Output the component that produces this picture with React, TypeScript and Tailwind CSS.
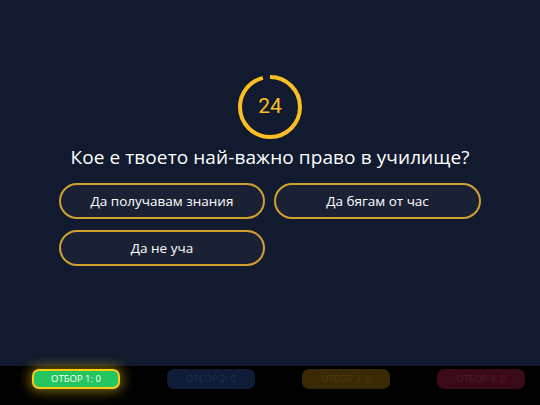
const answers = ["Да получавам знания", "Да бягам от час", "Да не уча"];

const teams = [
  { name: "ОТБОР 1: 0", cls: "bg-[#22c55e] text-white border-2 border-[#facc15] shadow-[0_0_12px_3px_rgba(250,204,21,0.45)]" },
  { name: "ОТБОР 2: 0", cls: "bg-[#0e1c38] text-[#1f3052]" },
  { name: "ОТБОР 3: 0", cls: "bg-[#3a2905] text-[#4f3a0c]" },
  { name: "ОТБОР 4: 0", cls: "bg-[#3a0b17] text-[#521a28]" },
];

const Timer = ({ value, total }: { value: number; total: number }) => {
  const r = 30;
  const c = 2 * Math.PI * r;
  const filled = (value / total) * c;
  return (
    <div className="relative w-[64px] h-[64px]">
      <svg width="64" height="64" viewBox="0 0 64 64">
        <circle
          cx="32"
          cy="32"
          r={r}
          fill="none"
          stroke="#fbbf24"
          strokeWidth="4"
          strokeDasharray={`${filled} ${c}`}
          transform="rotate(-90 32 32)"
        />
      </svg>
      <div className="absolute inset-0 flex items-center justify-center text-[21px] text-[#fbbf24] font-['Roboto',sans-serif]">
        {value}
      </div>
    </div>
  );
};

const App = () => {
  return (
    <div className="w-[540px] h-[405px] flex flex-col bg-[#111a2e] font-['Open_Sans',sans-serif] overflow-hidden">
      {/* Question area */}
      <div className="flex-1 flex flex-col items-center pt-[75px]">
        <Timer value={24} total={25} />
        <div className="mt-[5px] h-[26px] leading-[26px] text-[19px] text-white tracking-[0.1px]">
          Кое е твоето най-важно право в училище?
        </div>
        <div className="mt-[13px] grid grid-cols-[206px_207px] gap-x-[9px] gap-y-[11px]">
          {answers.map((a) => (
            <button
              key={a}
              className="h-[36px] rounded-full border-2 border-[#cfa22e] bg-[#1b2135] text-white text-[13.5px] flex items-center justify-center"
            >
              {a}
            </button>
          ))}
        </div>
      </div>

      {/* Teams bar */}
      <div className="h-[39px] bg-black flex items-start pt-[3px] pl-[32px] gap-[47px]">
        {teams.map((t) => (
          <div
            key={t.name}
            className={`w-[88px] h-[20px] rounded-[7px] flex items-center justify-center text-[9.5px] ${t.cls}`}
          >
            {t.name}
          </div>
        ))}
      </div>
    </div>
  );
};

export default App;
